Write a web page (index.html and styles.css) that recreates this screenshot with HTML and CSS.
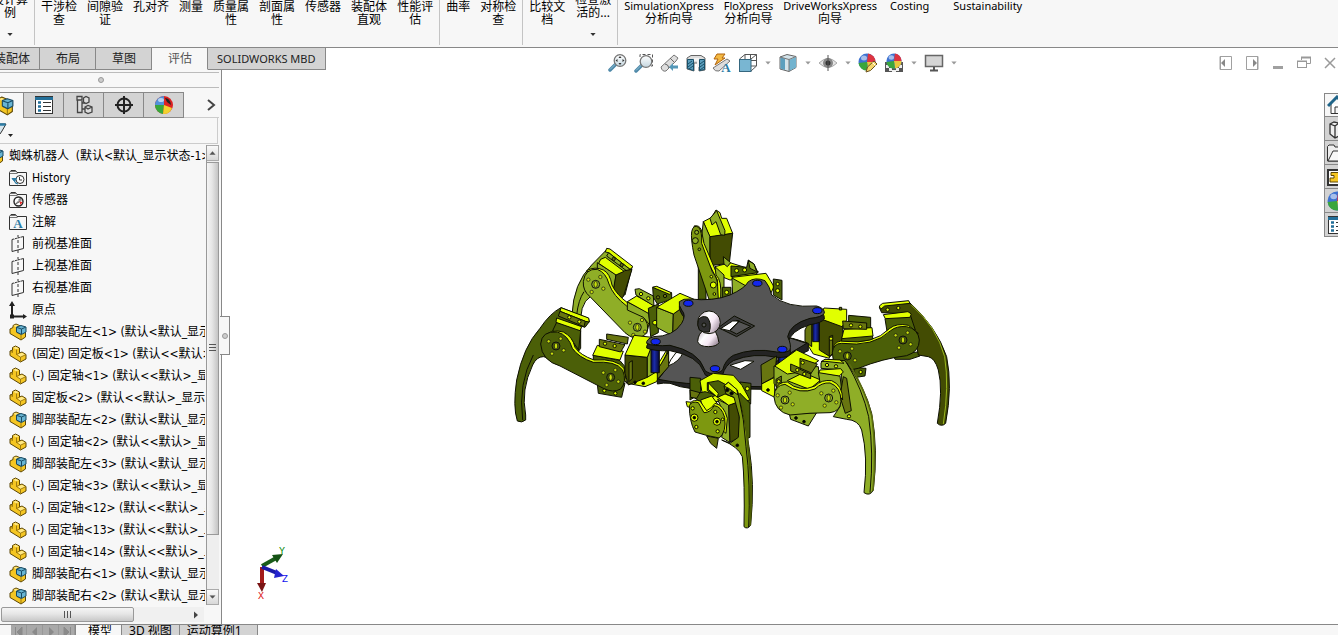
FILE: index.html
```html
<!DOCTYPE html>
<html lang="zh-CN">
<head>
  <meta charset="UTF-8" />
  <meta name="viewport" content="width=device-width, initial-scale=1.0"/>
  <title>SOLIDWORKS - 蜘蛛机器人</title>
  <link rel="stylesheet" href="styles.css">
</head>
<body>
  <!-- shared icons -->
  <svg class="defs" aria-hidden="true">
    <defs>
      <linearGradient id="ballShade" x1="0" y1="0" x2="1" y2="0.6">
        <stop offset="0" stop-color="#b9aab9"/><stop offset="0.4" stop-color="#ffffff"/><stop offset="0.7" stop-color="#f6e9f4"/><stop offset="1" stop-color="#a898a6"/>
      </linearGradient>
      <linearGradient id="postShade"><stop offset="0" stop-color="#060a50"/><stop offset="0.4" stop-color="#1c2ca8"/><stop offset="1" stop-color="#050838"/></linearGradient>
      <linearGradient id="lensShade" x1="0" y1="0" x2="0" y2="1"><stop offset="0" stop-color="#fff"/><stop offset="1" stop-color="#c4d6df"/></linearGradient>
    </defs>
    <symbol id="i-part" viewBox="0 0 18 18">
      <path d="M1 6L3.500 5V2.500L6.500 1L10.500 3V8L13 7L17 9.500V14L11.500 17L1 10.500Z" fill="#f5c622" stroke="#5d4706" stroke-linejoin="round"/>
      <path d="M4.300 2.800L6.500 1.700L9.800 3.200L7.500 4.400ZM8.300 10L10.500 8.800L13 7.800L16 9.700L11.500 12Z" fill="#ffe885"/>
      <path d="M7.500 4.500V9.500L11.500 12.200V16.500M11.500 12.200L16.500 9.800M7.500 9.500L10.500 8M1.500 6.300L3.500 7.500V5" fill="none" stroke="#8a6a0a" stroke-width="0.800"/>
    </symbol>
    <symbol id="i-asm" viewBox="0 0 18 18">
      <path d="M1 6L4 4.500V2.500L7 1L16.500 5V14L12 17L1 10.500Z" fill="#f5c622" stroke="#5d4706" stroke-linejoin="round"/>
      <path d="M4.500 2.800L7 1.700L10 3L7.500 4.500Z" fill="#ffe885"/>
      <path d="M12 16.500V11.500L7.500 9.500" fill="none" stroke="#8a6a0a" stroke-width="0.800"/>
      <path d="M7.500 4L12 2.500L17 4V9L12.500 11.500L7.500 9Z" fill="#69b5d3" stroke="#184a63" stroke-linejoin="round"/>
      <path d="M8 4.500L12.500 6L16.500 4.300M12.500 6V11" fill="none" stroke="#184a63"/>
    </symbol>
    <symbol id="i-folder" viewBox="0 0 18 18">
      <path d="M0.500 16.500V3.500L2 1.500H6.500L8 3.500H17.500V16.500Z" fill="#f7f7f7" stroke="#333"/>
      <path d="M1 4.500H8.500M2 2.500H7" stroke="#777" fill="none"/>
    </symbol>
    <symbol id="i-history" viewBox="0 0 18 18">
      <use href="#i-folder"/>
      <circle cx="11" cy="10.500" r="4" fill="#fff" stroke="#333"/><path d="M10.500 8V11H13" stroke="#333" fill="none"/>
      <path d="M3 9.500H7.500L5.500 12.500ZM5.500 12Q6 15 9 15" fill="#2d7ca5" stroke="#2d7ca5"/>
    </symbol>
    <symbol id="i-sensor" viewBox="0 0 18 18">
      <use href="#i-folder"/>
      <circle cx="9.500" cy="10.500" r="4.500" fill="#fff" stroke="#222" stroke-width="1.400"/>
      <path d="M6.500 13L10 9.500V8L12 7.500V9.500L10.500 11Z" fill="#bbb" stroke="#333" stroke-width="0.600"/><path d="M10.500 10.500L13.500 11L11.500 14Z" fill="#e22"/>
    </symbol>
    <symbol id="i-note" viewBox="0 0 18 18">
      <use href="#i-folder"/>
      <text x="9" y="15" text-anchor="middle" class="icon-serif">A</text>
    </symbol>
    <symbol id="i-plane" viewBox="0 0 18 18">
      <path d="M3 4.500L14.500 1.500V13.500L3 16.500Z" fill="none" stroke="#333"/>
      <path d="M9 0V18" stroke="#333" stroke-dasharray="3 2"/><path d="M5 3.800L12 2" stroke="#f7f7f7" stroke-dasharray="1 2"/>
    </symbol>
    <symbol id="i-origin" viewBox="0 0 18 18">
      <path d="M3 2V15.500H16" fill="none" stroke="#222" stroke-width="2"/><path d="M0 5L3 0L6 5ZM14 13L18 15.500L14 18Z" fill="#222"/><rect x="1" y="13.500" width="4" height="4" fill="#222"/>
    </symbol>
    <symbol id="i-ball" viewBox="0 0 18 18">
      <circle cx="9" cy="9" r="8.500" fill="#3c72d2"/>
      <path d="M9 9L10 0.500A8.500 8.500 0 0 1 17.500 9Z" fill="#dd3340"/>
      <path d="M9 9H17.500A8.500 8.500 0 0 1 10 17.500Z" fill="#e8c63c"/>
      <path d="M9 9L10 17.500A8.500 8.500 0 0 1 0.500 10Z" fill="#3aa63c"/>
      <ellipse cx="6" cy="5" rx="3" ry="2.500" fill="#fff" opacity="0.550"/>
    </symbol>
    <symbol id="i-down" viewBox="0 0 8 4"><path d="M0.500 0H7.500L4 4Z" fill="currentColor"/></symbol>
    <symbol id="i-glass" viewBox="0 0 20 20">
      <path d="M8 11L2 17" stroke="#4d88a8" stroke-width="3.500" stroke-linecap="round"/><path d="M7.500 11L2 16.500" stroke="#8fc0d6"/>
      <circle cx="12" cy="7.500" r="5.800" fill="url(#lensShade)" stroke="#777" stroke-width="1.300"/>
    </symbol>
    <symbol id="i-list" viewBox="0 0 20 20">
      <rect x="1.500" y="1.500" width="17" height="17" fill="#fff" stroke="#333"/><path d="M1 3.500H19" stroke="#226f99" stroke-width="3"/>
      <path d="M4 7.500H7M4 11.500H7M4 15.500H7" stroke="#226f99" stroke-width="2.500"/><path d="M9 7.500H17M9 11.500H17M9 15.500H17" stroke="#333"/>
    </symbol>
    <symbol id="bolts" viewBox="-30 -30 60 60" overflow="visible">
      <g fill="#c9e00c" stroke="#111" stroke-width="2"><circle r="12" fill="none" stroke-width="3"/><ellipse rx="5" ry="9"/>
      <circle cx="-22" cy="-14" r="5"/><circle cx="14" cy="-22" r="5"/><circle cx="23" cy="13" r="5"/><circle cx="-12" cy="23" r="5"/></g>
    </symbol>
  </svg>

  <div class="app">
    <header class="ribbon">
      <div class="group">
        <button class="cmd raised">设计算<br>例<svg class="drop"><use href="#i-down"/></svg></button>
      </div>
      <div class="group">
        <button class="cmd">干涉检<br>查</button>
        <button class="cmd">间隙验<br>证</button>
        <button class="cmd">孔对齐</button>
        <button class="cmd">测量</button>
        <button class="cmd">质量属<br>性</button>
        <button class="cmd">剖面属<br>性</button>
        <button class="cmd">传感器</button>
        <button class="cmd">装配体<br>直观</button>
        <button class="cmd">性能评<br>估</button>
      </div>
      <div class="group">
        <button class="cmd">曲率</button>
        <button class="cmd">对称检<br>查</button>
      </div>
      <div class="group">
        <button class="cmd">比较文<br>档</button>
        <button class="cmd raised">检查激<br>活的...<svg class="drop"><use href="#i-down"/></svg></button>
      </div>
      <div class="group">
        <button class="cmd"><span class="latin">SimulationXpress</span>分析向导</button>
        <button class="cmd"><span class="latin">FloXpress</span>分析向导</button>
        <button class="cmd"><span class="latin">DriveWorksXpress</span>向导</button>
        <button class="cmd wide"><span class="latin">Costing</span></button>
        <button class="cmd wide"><span class="latin">Sustainability</span></button>
      </div>
    </header>

    <div class="tab-row">
      <nav class="tabs">
        <button class="tab cut">装配体</button>
        <button class="tab">布局</button>
        <button class="tab">草图</button>
        <button class="tab active">评估</button>
        <button class="tab long">SOLIDWORKS MBD</button>
      </nav>
      <div class="view-tools">
        <button class="tool" aria-label="整屏显示全图"><svg viewBox="0 0 20 20"><use href="#i-glass"/><path d="M12 3L13.500 5H10.500ZM12 12L13.500 10H10.500ZM7.500 7.500L9.500 6V9ZM16.500 7.500L14.500 6V9Z" fill="#333"/></svg></button>
        <button class="tool" aria-label="局部放大"><svg viewBox="0 0 20 20"><path d="M6 4V1.500H18.500V13H16" fill="none" stroke="#555" stroke-dasharray="3 2"/><use href="#i-glass" y="1" width="20" height="20"/></svg></button>
        <button class="tool" aria-label="上一视图"><svg viewBox="0 0 20 20"><path d="M1 14L14 2L18 5L16 8L6 18Q2 19 1 14Z" fill="#ddd" stroke="#777"/><path d="M10 5L14 9M5 11Q8 11 9 15" stroke="#666" fill="none"/><path d="M9 14L13 10V12.500H18V15.500H13V18Z" fill="#5598b8"/></svg></button>
        <button class="tool" aria-label="剖面视图"><svg viewBox="0 0 20 20"><path d="M1 5L5 2.500H15L19 5V17L13 18V10H8V18L1 16Z" fill="#ddd" stroke="#666"/><path d="M1.500 6.500H7.500V17.500L1.500 15.500ZM13.500 6.500H18.500V16.500L13.500 17.500Z" fill="#5c9fbe" stroke="#194f68"/><path d="M2 11L6 8M2 14L7 10M3 16L7 13M14 11L18 8M14 14L18 11M14 17L18 14" stroke="#194f68"/><path d="M8 5H13V14H11V8H8Z" fill="#f3f3f3"/></svg></button>
        <button class="tool" aria-label="动态注解视图"><svg viewBox="0 0 20 20"><path d="M1 15L15 6L18 8L7 18Q3 19 1 15Z" fill="#ddd" stroke="#777"/><path d="M5 1H13L10 5H13L3 12L6 6H2Z" fill="#f4b942" stroke="#b0640e"/><text x="14" y="19" text-anchor="middle" class="icon-serif">A</text></svg></button>
        <button class="tool" aria-label="视图定向"><svg viewBox="0 0 20 20"><path d="M7 1.500H18.500V13L13 18M1.500 6L7 1.500V13M7 7.500H18.500M12.500 1.500V8M1.500 18L7 13H18.500M13 6L18.500 1.500" fill="none" stroke="#555"/><rect x="1.500" y="6.500" width="11.500" height="12" fill="#79b6d2" stroke="#35677f"/></svg></button>
        <svg class="caret"><use href="#i-down"/></svg>
        <button class="tool" aria-label="显示样式"><svg viewBox="0 0 20 20"><path d="M2 4L9 1.500L18 3.500V14.500L11 18.500L2 16Z" fill="#d3e3ea" stroke="#666"/><path d="M11 7L18 4V14.500L11 18Z" fill="#72b3cf"/><path d="M2.500 4.500L7 5.500V17L2.500 15.500Z" fill="#5c9fbe"/><path d="M2 4L11 6.500L18 3.500M11 6.500V18" fill="none" stroke="#777"/></svg></button>
        <svg class="caret"><use href="#i-down"/></svg>
        <button class="tool" aria-label="隐藏/显示项目"><svg viewBox="0 0 20 20"><path d="M1 10Q10 1 19 10Q10 19 1 10Z" fill="#e4e4e4" stroke="#aaa"/><circle cx="10" cy="10" r="5" fill="#888"/><circle cx="10" cy="10" r="2.500" fill="#333"/><path d="M10 2V18" stroke="#555"/></svg></button>
        <svg class="caret"><use href="#i-down"/></svg>
        <button class="tool" aria-label="编辑外观"><svg viewBox="0 0 20 20"><use href="#i-ball" width="18" height="18"/><path d="M8 19L9.500 14L16 8L19 11L12.500 17.500Z" fill="#f5d56b" stroke="#6a5220"/><path d="M14.500 9.500L17.500 12.500" stroke="#fff"/></svg></button>
        <button class="tool" aria-label="应用布景"><svg viewBox="0 0 20 20"><rect x="1" y="9" width="18" height="10" fill="#555"/><path d="M2 12H5V15H2ZM15 12H18V15H15ZM5 15H8V18H5ZM12 15H15V18H12ZM8 17H12V19H8Z" fill="#eee"/><use href="#i-ball" x="2" width="16" height="16"/></svg></button>
        <svg class="caret"><use href="#i-down"/></svg>
        <button class="tool" aria-label="视图设定"><svg viewBox="0 0 20 20"><rect x="1.500" y="2.500" width="17" height="11" fill="#d5d5d5" stroke="#666" stroke-width="1.500"/><path d="M10 14V17M6 17.500H14" stroke="#555" stroke-width="2"/></svg></button>
        <svg class="caret"><use href="#i-down"/></svg>
      </div>
      <div class="window-tools">
        <button class="tool" aria-label="左侧面板"><svg viewBox="0 0 20 20"><path d="M4 3.500H15.500V16.500H4ZM4.500 4V16" fill="none" stroke="#a0a0a0"/><path d="M5 10L9 6V14Z" fill="#888"/></svg></button>
        <button class="tool" aria-label="右侧面板"><svg viewBox="0 0 20 20"><path d="M4.500 3.500H16V16.500H4.500ZM15.500 4V16" fill="none" stroke="#a0a0a0"/><path d="M15 10L11 6V14Z" fill="#888"/></svg></button>
        <button class="tool" aria-label="最小化"><svg viewBox="0 0 20 20"><rect x="5" y="13" width="10" height="3" fill="#a0a0a0"/></svg></button>
        <button class="tool" aria-label="还原"><svg viewBox="0 0 20 20"><path d="M7.500 7V4.500H16.500V10.500H13" fill="none" stroke="#999"/><path d="M7 4.500H17M3 8.500H13" stroke="#999" stroke-width="2"/><rect x="3.500" y="8.500" width="9" height="6" fill="#fff" stroke="#999"/></svg></button>
        <button class="tool" aria-label="关闭"><svg viewBox="0 0 20 20"><path d="M5 5L15 15M15 5L5 15" stroke="#999" stroke-width="1.500"/></svg></button>
      </div>
    </div>

    <main class="workspace">
      <aside class="panel">
        <div class="grip"><span class="dot"></span></div>
        <div class="panel-tabs">
          <button class="ptab on" aria-label="设计树"><svg viewBox="0 0 18 18"><use href="#i-asm"/></svg></button>
          <button class="ptab" aria-label="属性"><svg viewBox="0 0 20 20"><use href="#i-list"/></svg></button>
          <button class="ptab" aria-label="配置"><svg viewBox="0 0 20 20"><path d="M3 1.500H8V5H3ZM3.500 5V17.500H8V6M8 8H11M8 14H11" fill="#ddd" stroke="#444" stroke-width="1.300"/><path d="M9.500 3L12 1.500L15 3V7L12 8.500L9.500 7ZM11 12L14 10.500L18 12V17L14 18.500L11 17ZM11 12L14 14L18 12" fill="#ddd" stroke="#444" stroke-width="1.300"/></svg></button>
          <button class="ptab" aria-label="尺寸"><svg viewBox="0 0 20 20"><circle cx="10" cy="10" r="6.500" fill="none" stroke="#222" stroke-width="2"/><path d="M10 1V19M1 10H19" stroke="#222" stroke-width="2"/></svg></button>
          <button class="ptab" aria-label="外观"><svg viewBox="0 0 20 20"><circle cx="10" cy="10" r="9" fill="#d22"/><path d="M10 10V1A9 9 0 0 0 1 10Z" fill="#5291d8"/><path d="M10 10H1A9 9 0 0 0 9 19Z" fill="#37a83b"/><path d="M10 10L9 19A9 9 0 0 0 18 13Z" fill="#f2d22e"/><path d="M11 3Q16 3 17 10L13 7Z" fill="#222"/><ellipse cx="7" cy="5" rx="3" ry="2" fill="#fff" opacity="0.600"/></svg></button>
          <button class="more" aria-label="更多"><svg viewBox="0 0 10 12"><path d="M2 1L8 6L2 11" fill="none" stroke="#444" stroke-width="2"/></svg></button>
        </div>
        <div class="filter">
          <button class="filter-btn" aria-label="过滤器"><svg viewBox="0 0 16 18"><path d="M-6 2H6L2 9L0 12" fill="#d7e6ee" stroke="#333"/><path d="M-6 2.500H5.500" stroke="#2d7ca5" stroke-width="2.500"/><path d="M8 12H13L10.500 15Z" fill="#222"/></svg></button>
        </div>
        <div class="tree-box">
          <ul class="tree">
            <li class="root"><svg><use href="#i-asm"/></svg>蜘蛛机器人&nbsp; (默认&lt;默认_显示状态-1&gt;)</li>
            <li><svg><use href="#i-history"/></svg>History</li>
            <li><svg><use href="#i-sensor"/></svg>传感器</li>
            <li><svg><use href="#i-note"/></svg>注解</li>
            <li><svg><use href="#i-plane"/></svg>前视基准面</li>
            <li><svg><use href="#i-plane"/></svg>上视基准面</li>
            <li><svg><use href="#i-plane"/></svg>右视基准面</li>
            <li><svg><use href="#i-origin"/></svg>原点</li>
            <li><svg><use href="#i-asm"/></svg>脚部装配左&lt;1&gt; (默认&lt;默认_显示状态-1&gt;)</li>
            <li><svg><use href="#i-part"/></svg>(固定) 固定板&lt;1&gt; (默认&lt;&lt;默认&gt;_显示状态 1&gt;)</li>
            <li><svg><use href="#i-part"/></svg>(-) 固定轴&lt;1&gt; (默认&lt;&lt;默认&gt;_显示状态 1&gt;)</li>
            <li><svg><use href="#i-part"/></svg>固定板&lt;2&gt; (默认&lt;&lt;默认&gt;_显示状态 1&gt;)</li>
            <li><svg><use href="#i-asm"/></svg>脚部装配左&lt;2&gt; (默认&lt;默认_显示状态-1&gt;)</li>
            <li><svg><use href="#i-part"/></svg>(-) 固定轴&lt;2&gt; (默认&lt;&lt;默认&gt;_显示状态 1&gt;)</li>
            <li><svg><use href="#i-asm"/></svg>脚部装配左&lt;3&gt; (默认&lt;默认_显示状态-1&gt;)</li>
            <li><svg><use href="#i-part"/></svg>(-) 固定轴&lt;3&gt; (默认&lt;&lt;默认&gt;_显示状态 1&gt;)</li>
            <li><svg><use href="#i-part"/></svg>(-) 固定轴&lt;12&gt; (默认&lt;&lt;默认&gt;_显示状态 1&gt;)</li>
            <li><svg><use href="#i-part"/></svg>(-) 固定轴&lt;13&gt; (默认&lt;&lt;默认&gt;_显示状态 1&gt;)</li>
            <li><svg><use href="#i-part"/></svg>(-) 固定轴&lt;14&gt; (默认&lt;&lt;默认&gt;_显示状态 1&gt;)</li>
            <li><svg><use href="#i-asm"/></svg>脚部装配右&lt;1&gt; (默认&lt;默认_显示状态-1&gt;)</li>
            <li><svg><use href="#i-asm"/></svg>脚部装配右&lt;2&gt; (默认&lt;默认_显示状态-1&gt;)</li>
          </ul>
          <div class="vscroll">
            <button class="sbtn" aria-label="向上"><svg viewBox="0 0 8 4"><path d="M0.500 4H7.500L4 0Z" fill="#555"/></svg></button>
            <div class="vthumb"><svg viewBox="0 0 7 10"><path d="M0 1.500H7M0 4.500H7M0 7.500H7" stroke="#555"/></svg></div>
            <button class="sbtn" aria-label="向下"><svg viewBox="0 0 8 4"><use href="#i-down"/></svg></button>
          </div>
        </div>
        <div class="hscroll">
          <div class="hthumb"><svg viewBox="0 0 9 7"><path d="M1.500 0V7M4.500 0V7M7.500 0V7" stroke="#555"/></svg></div>
          <button class="hbtn" aria-label="向右"><svg viewBox="0 0 4 8"><path d="M0 0.500V7.500L4 4Z" fill="#444"/></svg></button>
        </div>
        <button class="splitter" aria-label="折叠面板"><span class="dot"></span></button>
      </aside>

      <section class="viewport">
        <svg class="robot" viewBox="510 200 445 335" role="img" aria-label="蜘蛛机器人">
          <!-- rear leg -->
          <g class="part" transform="translate(630 200) scale(0.3333)">
            <path class="dark" d="M205 190H228V298H205Z"/>
            <path class="lit" d="M220 65L245 52L258 30L270 38L275 55L290 55L308 100L240 112Z"/>
            <path class="mid" d="M220 65L240 110L240 195L222 165L216 100Z"/>
            <path class="shade" d="M240 110L308 100L298 190L240 197Z"/>
            <path class="mid" d="M240 55L260 32L285 92L284 106L272 104L258 65L246 75Z"/>
            <path class="lit" d="M192 78Q208 74 214 90L222 130L256 210Q276 230 274 262V295L262 298L262 240L210 140Z"/>
            <path class="green" d="M185 95Q190 72 206 82Q217 95 215 130L248 218Q264 235 263 260L265 298H237L192 165Q182 115 185 95Z"/>
            <circle cx="200" cy="97" r="6" class="mid"/><circle cx="196" cy="122" r="9" class="mid"/><circle cx="208" cy="148" r="4" class="mid"/><circle cx="250" cy="255" r="9" class="lit"/><circle cx="244" cy="230" r="4" class="lit"/><circle cx="253" cy="282" r="4" class="lit"/>
            <path class="lit" d="M255 200L300 188L385 215L370 232L300 240L270 228Z"/>
            <path class="mid" d="M255 200L282 225L282 290L272 295Q276 240 258 225Z"/>
            <path class="dark" d="M303 198L350 202L355 180L372 192L384 218L303 230Z"/>
            <circle cx="320" cy="212" r="6" class="lit"/><circle cx="344" cy="210" r="6" class="lit"/>
            <path class="mid" d="M280 170L302 188L292 200L282 192ZM355 182L372 192L380 215L360 205Z"/>
            <path class="lit" d="M306 232L408 220L432 260L420 285L330 285Z"/>
            <path class="mid" d="M306 234L352 260L350 288L308 292Z"/>
            <path class="dark" d="M277 262H303V298H277ZM430 237L456 241V300L430 285Z"/>
            <circle cx="290" cy="277" r="6" class="lit"/><circle cx="443" cy="252" r="5" class="lit"/><circle cx="443" cy="272" r="6" class="lit"/>
          </g>

          <!-- rear left leg -->
          <g class="part" transform="translate(510 240) scale(0.3333)">
            <path class="mid" d="M186 225Q190 130 245 75L292 27L366 82L345 165L265 160Q215 170 212 235Z"/>
            <path d="M200 225Q205 180 222 155" fill="none"/>
            <path class="lit" d="M290 25L300 27L369 80L360 88L296 38L286 36Z"/>
            <path class="mid" d="M296 38L360 88L352 94L290 48Z"/>
            <circle cx="311" cy="57" r="5" class="olive"/><circle cx="335" cy="75" r="5" class="olive"/>
            <path class="mid" d="M262 68L318 104L310 170L262 110Z"/>
            <path class="shade" d="M318 104L344 92L366 88L340 170L325 182L308 162Z"/>
            <path class="lit" d="M272 58L286 52L342 94L318 105L266 70Z"/>
            <path class="lit" d="M230 92Q255 78 280 90Q300 100 306 135Q320 165 355 190Q405 210 418 248L410 280L380 240L280 150Z"/>
            <path class="mid" d="M220 125Q225 85 262 88Q288 98 297 132Q310 168 350 198Q400 215 412 252Q418 285 390 292Q370 300 345 278L240 170Q218 152 220 125Z"/>
            <use href="#bolts" x="227" y="103" width="60" height="60"/><use href="#bolts" x="352" y="232" width="60" height="60"/>
          </g>
          <g class="part" transform="translate(630 200) scale(0.3333)">
            <path class="mid" d="M-8 306L55 338L62 378L40 352L-8 330Z"/>
            <path class="lit" d="M-8 305L20 288L75 318L55 340Z"/>
            <path class="mid" d="M15 268L28 266L70 288L72 318L18 285Z"/>
            <path class="dark" d="M68 262L80 260L125 280V298L82 312L70 292Z"/>
            <path class="lit" d="M68 262L80 259L126 279L118 283Z"/>
            <path class="dark" d="M55 325L85 312V398L62 410Z"/>
            <circle cx="33" cy="282" r="5" class="lit"/><circle cx="55" cy="295" r="5" class="lit"/><circle cx="84" cy="292" r="5" class="olive"/><circle cx="105" cy="288" r="5" class="olive"/><circle cx="75" cy="368" r="7" class="lit"/>
            <path class="mid" d="M80 322L130 342L128 408L80 382Z"/>
            <path class="olive" d="M130 342L175 308L160 380L128 408Z"/>
            <path class="lit" d="M80 322L150 280L192 298L130 342Z"/>
          </g>

          <!-- left leg -->
          <g class="part" transform="translate(510 240) scale(0.3333)">
            <path class="dark" d="M153 203L235 235L238 245L225 262L212 258L212 325L180 370L100 350Q80 350 68 375Q32 450 47 525V540Q35 550 22 543Q8 500 20 420Q40 320 90 265Q120 220 153 203Z"/>
            <path d="M70 345Q24 430 38 540" fill="none"/>
            <path class="lit" d="M153 203L236 234L238 246L226 244L150 214Z"/>
            <path class="olive" d="M150 214L226 244L222 260L145 228Z"/>
            <circle cx="178" cy="232" r="5" class="lit"/><circle cx="208" cy="245" r="5" class="lit"/>
            <path class="dark" d="M128 272L140 247L212 272L206 330L185 300Z"/>
            <path class="lit" d="M140 234L215 260L210 272L138 247Z"/>
            <path class="dark" d="M250 345L330 362L345 380V420L250 380ZM262 432L345 430L335 472L265 460Z"/>
            <path class="olive" d="M290 282L355 292L352 312L290 298Z"/>
            <path class="lit" d="M262 316L340 334L330 360L248 346Z"/>
            <path class="olive" d="M268 298L345 314L332 336L268 320Z"/>
            <circle cx="285" cy="311" r="5" class="lit"/><circle cx="314" cy="318" r="5" class="lit"/><circle cx="283" cy="452" r="5" class="lit"/><circle cx="316" cy="460" r="5" class="lit"/>
            <path class="lit" d="M100 290Q125 266 160 276Q188 290 195 322Q210 345 252 360Q320 355 342 385L350 430L330 400L200 350Z"/>
            <path class="dark" d="M92 312Q95 272 142 276Q175 285 187 325Q205 352 250 367Q318 362 338 390Q352 425 332 447Q310 460 280 445L150 378Q95 362 92 312Z"/>
            <use href="#bolts" x="108" y="288" width="60" height="60"/><use href="#bolts" x="272" y="382" width="60" height="60"/>
            <path class="lit" d="M352 430L412 408L440 380L470 330L472 345L440 425L405 440Z"/>
            <path class="shade" d="M345 345L412 352V412L355 435L345 400Z"/>
            <path class="mid" d="M412 352L432 296L440 300V395L412 412Z"/>
            <path class="lit" d="M345 345L372 286L435 293L412 352Z"/>
            <path class="olive" d="M357 368L367 362V415L357 425ZM442 400L475 330V370L442 402Z"/>
            <circle cx="375" cy="427" r="4"/><circle cx="400" cy="430" r="4"/>
          </g>

          <!-- right rear leg -->
          <g class="part" transform="translate(750 290) scale(0.3333)">
            <path class="lit" d="M170 160L180 90L240 185L238 205L190 192Z"/>
            <path class="olive" d="M165 120L185 80V170L165 155Z"/>
            <path class="shade" d="M208 85L278 108V165L240 200L208 180Z"/>
            <path class="lit" d="M208 85L222 54L290 58L290 90L276 110Z"/>
            <path class="dark" d="M296 76L362 82V115H296ZM275 142L368 135V165H275Z"/>
            <path class="lit" d="M282 118L366 113L369 138L275 146Z"/>
            <path class="olive" d="M278 93L350 99V118L280 116ZM268 52H275V60H268ZM238 140L248 136V190L238 200Z"/>
            <circle cx="303" cy="106" r="5" class="lit"/><circle cx="331" cy="110" r="5" class="lit"/><circle cx="243" cy="146" r="5" class="lit"/>
            <path class="dark" d="M310 232L348 235L345 258L318 262ZM435 208L430 195L510 185V198L480 208Z"/>
            <circle cx="332" cy="246" r="5" class="lit"/>
            <path class="shade" d="M388 52L400 44L475 34Q560 110 590 200Q608 290 587 400Q575 412 562 400Q580 300 565 240Q555 205 535 200L505 195L490 110L470 72L395 68Z"/>
            <path class="lit" d="M388 48L398 40L476 32L480 40L404 48L392 58Z"/>
            <path d="M484 45Q560 110 584 200Q598 290 580 402" fill="none" stroke="#9bb81f"/>
            <circle cx="413" cy="59" r="5" class="lit"/><circle cx="445" cy="54" r="5" class="lit"/>
            <path class="dark" d="M405 86L482 78L496 120L412 130Z"/>
            <path class="lit" d="M400 74L474 65L484 72L480 82L406 86Z"/>
            <path class="lit" d="M250 170Q260 150 282 154Q370 165 418 116Q440 98 475 106L505 130L440 130L300 180Z"/>
            <path class="dark" d="M247 188Q250 160 275 160Q370 172 422 122Q440 107 470 110Q505 117 508 150Q508 185 470 197Q400 205 325 235L290 242Q247 232 247 188Z"/>
            <use href="#bolts" x="429" y="120" width="60" height="60"/><use href="#bolts" x="262" y="168" width="60" height="60"/>
          </g>

          <!-- base plates and posts -->
          <g class="part" transform="translate(630 200) scale(0.3333)">
            <path d="M82 540L160 450L480 412L535 430V452L430 500L400 568Q330 568 250 562Q180 575 120 550Q100 548 82 552Z" fill="#222"/>
            <path class="plate" d="M85 538L160 440L480 414L530 430L430 490L395 560Q330 560 250 552Q170 555 85 538Z"/>
            <path d="M114 498Q150 485 160 455L138 458L122 480Z" fill="#fff"/><path d="M300 496L345 482L372 484L332 508Z" fill="#fff"/>
            <path d="M480 412Q478 395 490 380L520 362V420Z" fill="#fff" stroke="none"/>
            <path class="olive" d="M82 510L116 455V500L82 538Z"/>
            <rect x="63" y="440" width="25" height="78" fill="url(#postShade)"/>
            <rect x="548" y="355" width="20" height="70" fill="url(#postShade)"/>
            <rect x="446" y="460" width="26" height="30" fill="url(#postShade)"/>
            <path transform="translate(0 12)" d="M148 305Q160 295 180 297Q250 305 300 285Q345 265 355 245Q375 230 405 242Q420 260 425 285Q470 325 560 318Q585 325 583 345Q575 357 540 362Q480 380 473 420Q485 440 480 452Q470 462 440 460Q370 445 310 470Q285 485 278 512Q265 522 240 520Q222 515 222 505Q205 455 120 440Q70 442 50 432Q48 418 70 410Q130 410 155 370Q170 345 155 330Q145 315 148 305Z" fill="#242424"/>
            <path class="plate" d="M148 305Q160 295 180 297Q250 305 300 285Q345 265 355 245Q375 230 405 242Q420 260 425 285Q470 325 560 318Q585 325 583 340Q575 352 540 355Q480 372 473 410Q485 435 480 450Q470 460 440 456Q370 442 310 466Q285 480 278 510Q265 522 240 520Q222 515 222 505Q205 455 120 436Q70 440 50 430Q48 418 70 410Q130 410 155 370Q170 345 155 330Q145 315 148 305Z"/>
            <g fill="#1226ee"><ellipse cx="175" cy="310" rx="14" ry="9"/><ellipse cx="382" cy="250" rx="14" ry="9"/><ellipse cx="562" cy="332" rx="14" ry="9"/><ellipse cx="457" cy="448" rx="14" ry="9"/><ellipse cx="255" cy="506" rx="14" ry="9"/><ellipse cx="77" cy="425" rx="14" ry="9"/></g>
            <path d="M313 348L374 378L320 410L265 383Z" fill="#3c3c3c"/><path d="M272 386L308 363L328 363L298 392Z" fill="#fff"/><path d="M318 361L362 379L320 402L300 392L328 364Z" class="plate"/>
            <path d="M203 425Q205 400 220 392H255Q265 410 267 428Q260 440 235 440Q208 440 203 425Z" fill="url(#ballShade)"/>
            <circle cx="237" cy="367" r="34" fill="url(#ballShade)"/>
            <path d="M205 360Q215 345 232 352Q246 370 238 396Q220 400 208 390Q200 375 205 360Z" fill="#303030"/><circle cx="222" cy="375" r="6" fill="#555"/>
          </g>

          <!-- front right leg -->
          <g class="part" transform="translate(750 290) scale(0.3333)">
            <path class="olive" d="M33 225L80 198L74 260L35 282Z"/>
            <path class="lit" d="M35 282L74 262V322L35 302Z"/><circle cx="54" cy="300" r="4"/>
            <path class="mid" d="M72 228L205 230L212 300H90L72 280Z"/>
            <path class="lit" d="M74 228L140 180L206 212L160 245L112 252Z"/>
            <path class="lit" d="M112 272L160 248L212 270L178 298Z"/>
            <path class="olive" d="M150 205L202 222L182 252L150 238ZM122 222L182 248V266L122 243ZM78 268L94 258V285L78 290Z"/>
            <circle cx="142" cy="240" r="5" class="lit"/><circle cx="163" cy="252" r="5" class="lit"/><circle cx="86" cy="274" r="5" class="lit"/><circle cx="158" cy="218" r="5" class="lit"/>
            <path class="mid" d="M118 372L200 368L175 408L122 388Z"/><circle cx="138" cy="384" r="4"/><circle cx="162" cy="395" r="4"/>
            <path class="mid" d="M213 218L225 208L285 212Q345 290 365 370Q385 480 370 600Q360 620 342 608Q355 500 335 420Q325 390 290 388L250 380L270 350L275 240L213 235Z"/>
            <path d="M290 218Q338 300 356 380Q372 490 360 608" fill="none"/><path d="M298 222Q346 300 366 380Q380 490 369 602" fill="none" stroke="#5a6a10" stroke-width="5"/>
            <path class="lit" d="M213 215L225 208L270 210L282 220L225 214Z"/>
            <circle cx="231" cy="225" r="5" class="lit"/><circle cx="258" cy="229" r="5" class="lit"/><circle cx="297" cy="379" r="5" class="lit"/>
            <path class="mid" d="M205 246L270 258L275 300L212 290Z"/>
            <path class="lit" d="M210 240L272 236L280 246L268 258L206 248Z"/>
            <path class="olive" d="M280 260L290 265L304 362L286 370L270 320Z"/>
            <path class="lit" d="M76 300Q85 275 112 276Q150 308 195 288Q215 268 245 272Q278 285 278 330L255 300L120 305Z"/>
            <path class="mid" d="M72 320Q75 285 105 283Q150 315 195 297Q215 277 240 279Q273 290 273 335Q270 365 240 368Q180 368 120 375Q75 365 72 320Z"/>
            <use href="#bolts" x="75" y="300" width="60" height="60"/><use href="#bolts" x="206" y="294" width="60" height="60"/>
          </g>

          <!-- front leg -->
          <g class="part" transform="translate(650 350) scale(0.3333)">
            <path class="dark" d="M120 82L152 85V130L120 150ZM270 96L303 100L302 162L270 140Z"/>
            <circle cx="292" cy="116" r="6" class="lit"/>
            <path class="lit" d="M150 92L190 70L250 76L276 106L300 150L250 160L160 150Z"/>
            <path class="dark" d="M172 98L205 92L235 108V135L205 142L172 122ZM122 135L165 125L200 135L150 155Z"/>
            <path class="lit" d="M108 155L135 158L130 175L112 170ZM175 98L205 130L202 142L175 118Z"/>
            <path class="olive" d="M170 258L205 265L200 295L182 280ZM120 120L150 128L140 145L122 142Z"/>
            <path class="lit" d="M152 150L185 138L205 165L180 188L160 178Z"/>
            <path class="mid" d="M203 148L236 165L240 278L215 262L225 200Z"/>
            <path class="shade" d="M236 165L265 156L272 262L240 276Z"/><path class="lit" d="M203 142L225 132L262 146L264 156L236 166Z"/>
            <path class="dark" d="M270 130L300 160V262L286 268Z"/>
            <path class="green" d="M222 108L235 97L262 120Q285 200 297 290Q315 400 302 525Q292 540 282 530Q285 400 277 320Q265 290 215 270L240 280L265 262L268 200L252 142L228 132Z"/>
            <path d="M264 128Q284 210 288 290Q302 400 296 532" fill="none"/><path d="M268 130Q290 210 294 290Q308 400 300 526" fill="none" stroke="#4c5c05" stroke-width="6"/>
            <path class="lit" d="M222 108L235 97L260 118L264 135L236 115Z"/>
            <circle cx="232" cy="120" r="5"/><circle cx="245" cy="130" r="5"/><circle cx="262" cy="286" r="4"/>
            <path class="lit" d="M120 160Q132 146 150 153L170 182Q185 175 195 160Q222 165 232 205L228 250Z"/>
            <path class="green" d="M118 167Q125 152 145 158L162 188Q182 188 192 167Q214 168 224 202Q230 245 208 264Q170 258 135 246Q118 215 118 167Z"/>
            <circle cx="133" cy="203" r="11" class="lit"/><circle cx="201" cy="215" r="11" class="lit"/><circle cx="133" cy="203" r="4"/><circle cx="201" cy="215" r="4"/>
            <circle cx="128" cy="175" r="5" class="lit"/><circle cx="139" cy="231" r="5" class="lit"/><circle cx="196" cy="186" r="5" class="lit"/><circle cx="203" cy="244" r="5" class="lit"/><circle cx="218" cy="208" r="4" class="lit"/>
          </g>
        </svg>

        <svg class="triad" viewBox="0 0 40 60">
          <path d="M8 24L24 15" stroke="#195c19" stroke-width="4"/><path d="M18 13L29 12L23 21Z" fill="#145214"/>
          <path d="M8 25V44" stroke="#a31b1b" stroke-width="4"/><path d="M3 41H12L8 50Z" fill="#7a1414"/>
          <path d="M8 25L23 31" stroke="#1a1aa8" stroke-width="4"/><path d="M22 27L30 34L20 36Z" fill="#2323cf"/>
          <text x="25" y="12" fill="#0a8a0a">Y</text><text x="28" y="40" fill="#1111ee">Z</text><text x="4" y="57" fill="#dd1111">X</text>
        </svg>
      </section>

      <nav class="task-pane">
        <button class="task on" aria-label="主页"><svg viewBox="0 0 20 20"><path d="M4 9V18.500H16V9M8 18V12H13V18" fill="#fff" stroke="#333"/><path d="M1 11L10 2L19 11" fill="none" stroke="#1f6488" stroke-width="3"/></svg></button>
        <button class="task" aria-label="设计库"><svg viewBox="0 0 20 20"><path d="M3 5L7 3L12 4V17L8 19L3 15ZM3 5L8 7V19M8 7L12 4M12 4L16 3V17L12 18" fill="#eee" stroke="#333" stroke-width="1.300"/></svg></button>
        <button class="task" aria-label="文件探索器"><svg viewBox="0 0 20 20"><path d="M0.500 18V3.500L2 2H7L8 4H19V18Z" fill="#eee" stroke="#333"/><path d="M1 18L6 8H20V18Z" fill="#f8f8f8" stroke="#333"/></svg></button>
        <button class="task" aria-label="视图调色板"><svg viewBox="0 0 20 20"><rect x="1" y="3" width="19" height="15" fill="#fff" stroke="#333" stroke-width="2"/><path d="M4 5.500H15V8.500H12V11H17V15H3V11H7V8.500H4Z" fill="#f5c622" stroke="#5d4706"/></svg></button>
        <button class="task" aria-label="外观、布景和贴图"><svg viewBox="0 0 18 18"><use href="#i-ball"/></svg></button>
        <button class="task" aria-label="自定义属性"><svg viewBox="0 0 20 20"><use href="#i-list"/></svg></button>
      </nav>
    </main>

    <footer class="doc-tabs">
      <div class="steps">
        <button class="step" aria-label="第一个"><svg viewBox="0 0 16 12"><path d="M4.500 2V12M11 2V12L6 7Z" fill="#8a8a8a" stroke="#8a8a8a"/></svg></button>
        <button class="step" aria-label="上一个"><svg viewBox="0 0 16 12"><path d="M10 2V12L5 7Z" fill="#8a8a8a"/></svg></button>
        <button class="step" aria-label="下一个"><svg viewBox="0 0 16 12"><path d="M6 2V12L11 7Z" fill="#8a8a8a"/></svg></button>
        <button class="step" aria-label="最后一个"><svg viewBox="0 0 16 12"><path d="M11.500 2V12M5 2V12L10 7Z" fill="#8a8a8a" stroke="#8a8a8a"/></svg></button>
      </div>
      <button class="doc on">模型</button>
      <button class="doc">3D 视图</button>
      <button class="doc last">运动算例1</button>
    </footer>
  </div>
</body>
</html>
```
FILE: styles.css
```css
* {
  box-sizing: border-box;
}
body {
  margin: 0;
  background: #fff;
  color: #000;
  font: 12px/12px "Noto Sans", "Noto Sans CJK SC", sans-serif;
  overflow: hidden;
}
button {
  font: inherit;
  color: inherit;
  border: none;
  background: none;
  padding: 0;
  margin: 0;
}
svg {
  display: block;
  flex: none;
}
.defs {
  position: absolute;
  width: 0;
  height: 0;
}
.icon-serif {
  font: bold 13px "Liberation Serif", serif;
  fill: #2d7ca5;
}
.app {
  display: flex;
  flex-direction: column;
  height: 100vh;
}

/* ribbon */
.ribbon {
  display: flex;
  height: 48px;
  background: #f7f7f7;
  border-bottom: 1px solid #888;
  overflow: hidden;
}
.group {
  display: flex;
  align-items: flex-start;
  height: 45px;
  padding: 0 1px;
  border-right: 1px solid #c4c4c4;
}
.group:first-child {
  width: 35px;
  justify-content: flex-end;
}
.group:last-child {
  border-right: none;
}
.cmd {
  padding: 0 5px;
  text-align: center;
  white-space: nowrap;
  line-height: 13px;
}
.cmd.raised {
  margin-top: -7px;
}
.cmd.wide {
  padding: 0 8px;
  margin-right: 8px;
}
.latin {
  display: block;
  font-size: 11px;
  line-height: 12px;
}
.drop {
  width: 6px;
  height: 3px;
  margin: 14px auto 0;
  color: #333;
}

/* command tabs and view toolbar */
.tab-row {
  display: flex;
  height: 22px;
}
.tabs {
  display: flex;
}
.tab {
  height: 22px;
  padding: 0 15px 0 16px;
  background: #d3d3d3;
  border-right: 1px solid #888;
  border-bottom: 1px solid #888;
  color: #222;
  white-space: nowrap;
}
.tab.cut {
  display: flex;
  justify-content: flex-end;
  align-items: center;
  width: 40px;
  padding: 0 9px 0 0;
  overflow: hidden;
}
.tab.active {
  background: #f7f7f7;
  border-bottom-color: #f7f7f7;
  color: #555;
}
.tab.long {
  padding: 0 9px;
  font-size: 11px;
}
.view-tools,
.window-tools {
  display: flex;
  align-items: center;
  height: 30px;
}
.view-tools {
  flex: 1;
  justify-content: center;
  padding-left: 28px;
}
.window-tools {
  margin-right: -5px;
}
.tool {
  display: flex;
  justify-content: center;
  width: 26px;
}
.tool svg {
  width: 20px;
  height: 20px;
}
.caret {
  width: 6px;
  height: 4px;
  margin: 0 4px;
  color: #999;
}

/* feature manager panel */
.workspace {
  display: flex;
  flex: 1;
  min-height: 0;
}
.panel {
  position: relative;
  display: flex;
  flex-direction: column;
  flex: none;
  width: 222px;
  padding: 2px 2px 0 0;
  background: #f7f7f7;
  border-right: 1px solid #888;
}
.grip {
  display: flex;
  justify-content: center;
  align-items: center;
  height: 16px;
  padding-right: 18px;
  border-top: 1px solid #bbb;
  border-bottom: 1px solid #bbb;
}
.dot {
  width: 6px;
  height: 6px;
  border: 1px solid #999;
  border-radius: 50%;
  background: #ccc;
}
.panel-tabs {
  display: flex;
  height: 26px;
  margin-top: 4px;
}
.ptab {
  display: flex;
  justify-content: center;
  align-items: center;
  width: 40px;
  background: #d3d3d3;
  border: 1px solid #888;
  border-left: none;
}
.ptab svg {
  width: 20px;
  height: 20px;
}
.ptab.on {
  justify-content: flex-end;
  width: 24px;
  padding-right: 9px;
  background: #f7f7f7;
  border-bottom: none;
}
.more {
  display: flex;
  flex: 1;
  justify-content: center;
  align-items: center;
  padding-left: 18px;
  border-bottom: 1px solid #ccc;
}
.more svg {
  width: 10px;
  height: 12px;
}
.filter {
  height: 26px;
  margin-right: 1px;
  border: 1px solid #ccc;
  border-left: none;
  border-top: none;
}
.filter-btn svg {
  width: 16px;
  height: 18px;
  margin-top: 4px;
}
.tree-box {
  display: flex;
  flex: 1;
  min-height: 0;
  padding-top: 1px;
}
.tree {
  flex: 1;
  min-width: 0;
  margin: 0 1px 0 -14px;
  padding: 0;
  list-style: none;
  overflow: hidden;
  font-family: "DejaVu Sans Condensed", "Noto Sans CJK SC", sans-serif;
}
.tree li {
  display: flex;
  align-items: center;
  gap: 5px;
  height: 22px;
  padding-left: 23px;
  white-space: nowrap;
}
.tree li.root {
  padding-left: 0;
}
.tree svg {
  width: 18px;
  height: 18px;
}
.vscroll {
  display: flex;
  flex-direction: column;
  flex: none;
  width: 13px;
  border-left: 1px solid #999;
  background: #eee;
}
.sbtn {
  display: flex;
  justify-content: center;
  align-items: center;
  height: 16px;
  border: 1px solid #aaa;
  border-left: none;
  background: linear-gradient(#fafafa, #d8d8d8);
  color: #555;
}
.sbtn svg {
  width: 7px;
  height: 4px;
}
.sbtn:last-child {
  margin-top: auto;
}
.vthumb {
  display: flex;
  justify-content: center;
  align-items: center;
  height: 81%;
  margin-top: 1px;
  border: 1px solid #999;
  border-left: none;
  background: linear-gradient(to right, #f5f5f5, #e6e6e6 45%, #c4c4c4);
}
.vthumb svg {
  width: 7px;
  height: 10px;
}
.hscroll {
  display: flex;
  height: 19px;
  padding: 2px 15px 2px 1px;
}
.hthumb {
  display: flex;
  justify-content: center;
  align-items: center;
  width: 133px;
  border: 1px solid #999;
  border-radius: 2px;
  background: linear-gradient(#f5f5f5, #e6e6e6 45%, #c8c8c8);
}
.hthumb svg {
  width: 9px;
  height: 7px;
}
.hbtn {
  display: flex;
  flex: 1;
  justify-content: flex-end;
  align-items: center;
  padding-right: 6px;
  background: #f0f0f0;
}
.hbtn svg {
  width: 4px;
  height: 8px;
}
.splitter {
  position: absolute;
  left: 220px;
  top: 246px;
  display: flex;
  justify-content: center;
  align-items: center;
  width: 10px;
  height: 39px;
  border: 1px solid #888;
  border-left: none;
  background: #f7f7f7;
}

/* graphics area */
.viewport {
  position: relative;
  flex: 1;
  overflow: hidden;
}
.robot {
  position: absolute;
  left: 288px;
  top: 130px;
  width: 445px;
  height: 335px;
}
.part {
  stroke: #0d0f02;
  stroke-width: 3;
  stroke-linejoin: round;
}
.lit {
  fill: #e1ff00;
}
.mid {
  fill: #8fae27;
}
.green {
  fill: #7d9810;
}
.olive {
  fill: #687510;
}
.dark {
  fill: #4b5f08;
}
.shade {
  fill: #434c03;
}
.plate {
  fill: #555;
}
.triad {
  position: absolute;
  left: 32px;
  bottom: 22px;
  width: 40px;
  height: 60px;
  font: 10px "Liberation Mono", monospace;
}

.task-pane {
  flex: none;
  align-self: flex-start;
  width: 14px;
  margin-top: 23px;
  border-left: 1px solid #888;
  border-top: 1px solid #888;
  overflow: hidden;
}
.task {
  display: flex;
  align-items: center;
  width: 24px;
  height: 24px;
  padding-left: 2px;
  background: #d3d3d3;
  border-bottom: 1px solid #888;
}
.task.on {
  height: 23px;
  background: #f7f7f7;
}
.task svg {
  width: 20px;
  height: 20px;
}

/* bottom tabs */
.doc-tabs {
  display: flex;
  height: 11px;
  padding-left: 11px;
  background: #f7f7f7;
  border-top: 1px solid #888;
  overflow: hidden;
}
.steps {
  display: flex;
  border-right: 1px solid #888;
  background: #a9a9a9;
}
.step {
  width: 16px;
  border-right: 1px solid #999;
}
.step svg {
  width: 16px;
  height: 12px;
}
.doc {
  height: 12px;
  padding: 0 7px;
  background: #d3d3d3;
  border-right: 1px solid #888;
  white-space: nowrap;
}
.doc.on {
  padding: 0 9px 0 12px;
  background: #f7f7f7;
}
.doc.last {
  padding-right: 15px;
}
```
